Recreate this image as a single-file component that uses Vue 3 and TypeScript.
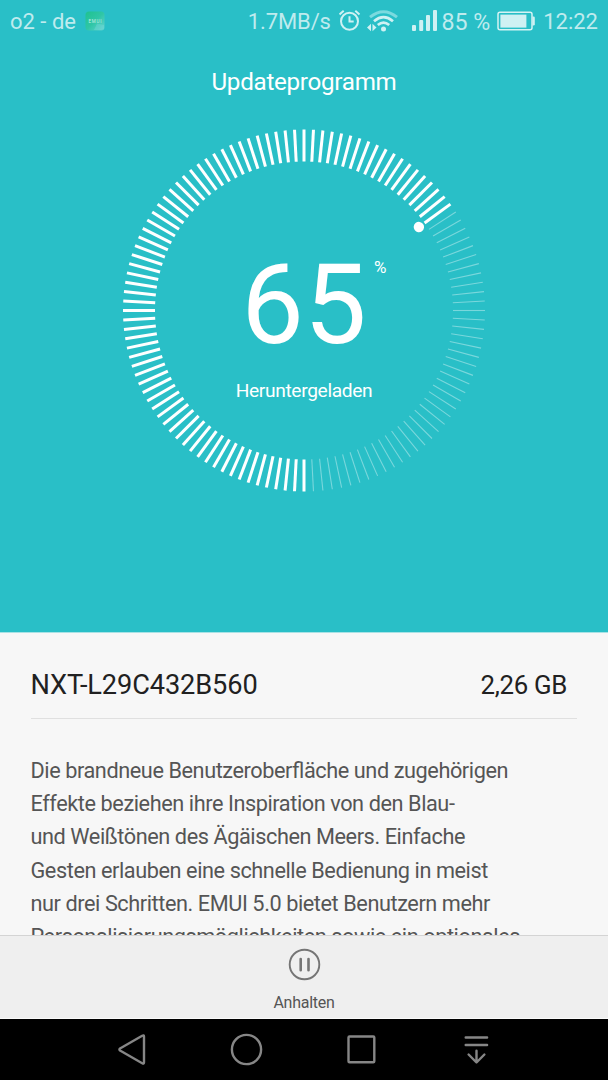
<script setup lang="ts">
interface Tick {
  angle: number
  done: boolean
}

const percent = 65
const tickCount = 120
const reached = Math.round((percent / 100) * tickCount)

const ticks: Tick[] = Array.from({ length: tickCount }, (_, i) => ({
  angle: i * (360 / tickCount),
  done: i <= reached,
}))
const knobAngle = reached * (360 / tickCount)

const lines: string[] = [
  'Die brandneue Benutzeroberfläche und zugehörigen',
  'Effekte beziehen ihre Inspiration von den Blau-',
  'und Weißtönen des Ägäischen Meers. Einfache',
  'Gesten erlauben eine schnelle Bedienung in meist',
  'nur drei Schritten. EMUI 5.0 bietet Benutzern mehr',
  'Personalisierungsmöglichkeiten sowie ein optionales',
]
</script>

<template>
  <div class="screen">
    <section class="hero">
      <header class="status">
        <span class="carrier">o2 - de</span>
        <svg class="emui" width="20" height="20" viewBox="0 0 20 20">
          <defs>
            <linearGradient id="emuiFill" x1="0" y1="0" x2="1" y2="1">
              <stop offset="0" stop-color="#1fc28f" />
              <stop offset="0.5" stop-color="#2fc6a6" />
              <stop offset="1" stop-color="#62d3d2" />
            </linearGradient>
          </defs>
          <rect x="0.5" y="0.5" width="19" height="19" rx="3.5" fill="url(#emuiFill)" />
          <path d="M12 12.5L19 14v3.5L16 19H9z" fill="#7ddbe0" opacity="0.35" />
          <text x="10" y="11.5" text-anchor="middle" textLength="13" class="emui-text">EMUI</text>
        </svg>
        <span class="grow"></span>
        <span class="speed">1.7MB/s</span>
        <svg class="alarm" width="22" height="24" viewBox="0 0 22 24" fill="none" stroke="#cff1f3" stroke-width="2">
          <circle cx="10.5" cy="12.3" r="8.5" />
          <path d="M10.5 7.3v5.2h4.2" />
          <path d="M0.5 5.4L4.7 1.8M20.5 5.4L16.3 1.8" />
        </svg>
        <svg class="wifi" width="32" height="24" viewBox="0 0 32 24" fill="none">
          <path d="M4 8.2Q17.5-2.8 31 8.2" stroke="#7bdadf" stroke-width="3" />
          <path d="M8 12.2Q17.5 4 27 12.2" stroke="#cff1f3" stroke-width="2.7" />
          <path d="M11.8 16Q17.5 11.2 23.2 16" stroke="#cff1f3" stroke-width="2.7" />
          <circle cx="17.5" cy="20" r="2.5" fill="#cff1f3" />
          <path d="M1 18.5L5 14.8v7.4zM10.5 18.5L6.5 14.8v7.4z" fill="#cff1f3" />
        </svg>
        <svg class="signal" width="25" height="22" viewBox="0 0 25 22" fill="#cff1f3">
          <rect x="0" y="15" width="4" height="6" rx="1" />
          <rect x="7.2" y="10" width="4" height="11" rx="1" />
          <rect x="14" y="5" width="4" height="16" rx="1" />
          <rect x="21" y="0" width="4" height="21" rx="1" />
        </svg>
        <span class="charge">85 %</span>
        <svg class="battery" width="38" height="20" viewBox="0 0 38 20">
          <rect x="1" y="1.2" width="34" height="17.6" rx="2" fill="none" stroke="#d5f3f4" stroke-width="1.5" />
          <rect x="3.4" y="3.6" width="26" height="13" fill="#cff1f3" />
          <path d="M35.4 5.4h1q1.4 0 1.4 1.4v6.4q0 1.4-1.4 1.4h-1z" fill="#cff1f3" />
        </svg>
        <span class="clock">12:22</span>
      </header>

      <h1 class="title">Updateprogramm</h1>

      <div class="dial">
        <svg class="ring" width="364" height="365" viewBox="-182 -182.5 364 365">
          <line
            v-for="tick in ticks"
            :key="tick.angle"
            x1="0"
            y1="149"
            x2="0"
            y2="181"
            :class="tick.done ? 'tick-done' : 'tick-open'"
            :transform="`rotate(${tick.angle})`"
          />
          <circle cx="0" cy="142" r="5.2" fill="#fff" :transform="`rotate(${knobAngle})`" />
        </svg>
        <div class="readout">
          <div class="value">{{ percent }}<span class="unit">%</span></div>
          <div class="state">Heruntergeladen</div>
        </div>
      </div>
    </section>

    <main class="details">
      <div class="build">
        <span class="build-name">NXT-L29C432B560</span>
        <span class="build-size">2,26 GB</span>
      </div>
      <p class="notes">
        <span v-for="line in lines" :key="line" class="line">{{ line }}</span>
      </p>
    </main>

    <footer class="action">
      <svg width="34" height="34" viewBox="0 0 34 34" fill="none" stroke="#757575">
        <circle cx="17.5" cy="16.5" r="14.8" stroke-width="1.9" />
        <path d="M13.7 11.1v11.2M21.5 11.1v11.2" stroke-width="2.6" stroke-linecap="round" />
      </svg>
      <span class="action-label">Anhalten</span>
    </footer>

    <nav class="navbar">
      <svg width="608" height="61" viewBox="0 0 608 61" fill="none" stroke="#868686" stroke-width="2.4" stroke-linecap="round" stroke-linejoin="round">
        <path d="M142.2 16.8Q144 15.8 144 17.5V43.5Q144 45.2 142.2 44.2L120 31.5Q118.8 30.5 120 29.5Z" />
        <circle cx="246.5" cy="30.5" r="14.6" />
        <rect x="348.5" y="17.5" width="25.8" height="25.8" rx="1" />
        <path d="M465.7 18.5h21.4M465.7 26h21.4M476.5 31.8v11.5M468.6 35.5l7.9 8 7.9-8" />
      </svg>
    </nav>
  </div>
</template>

<style>
body {
  margin: 0;
}
</style>

<style scoped>
.screen {
  width: 608px;
  height: 1080px;
  display: flex;
  flex-direction: column;
  overflow: hidden;
  background: #f7f7f7;
  font-family: Roboto, "Noto Sans", sans-serif;
}
.hero {
  height: 633px;
  flex: none;
  background: #29bfc7;
  border-bottom: 1px solid #a9e2e5;
  box-sizing: border-box;
  color: #fff;
}
.status {
  height: 42px;
  display: flex;
  align-items: center;
  padding: 0 10px;
  font-size: 22px;
  line-height: 40px;
  color: #bfebee;
  white-space: nowrap;
}
.status span {
  padding-top: 2px;
}
.emui {
  margin-left: 9px;
}
.emui-text {
  font-size: 4.5px;
  fill: #c5efe6;
}
.grow {
  flex: 1;
}
.speed {
  letter-spacing: -0.1px;
}
.alarm {
  margin-left: 8px;
}
.wifi {
  margin-left: 5px;
}
.signal {
  margin-left: 14px;
}
.charge {
  margin-left: 4.5px;
  font-size: 23.2px;
}
.battery {
  margin-left: 7px;
}
.clock {
  margin-left: 8px;
}
.title {
  margin: 24px 0 0;
  font-size: 24.2px;
  letter-spacing: -0.28px;
  font-weight: 400;
  line-height: 32px;
  text-align: center;
}
.dial {
  width: 364px;
  margin: 30px auto 0;
  display: grid;
}
.ring,
.readout {
  grid-area: 1 / 1;
}
.tick-done {
  stroke: #fff;
  stroke-width: 3;
}
.tick-open {
  stroke: #fff;
  stroke-opacity: 0.38;
  stroke-width: 1.1;
}
.readout {
  text-align: center;
  padding-top: 117px;
}
.value {
  position: relative;
  width: 132px;
  margin: 0 auto;
  font-size: 111.5px;
  line-height: 120px;
}
.unit {
  position: absolute;
  left: 136px;
  top: 12px;
  font-size: 17px;
  line-height: 20px;
}
.state {
  margin-top: 14px;
  font-size: 19.2px;
  letter-spacing: -0.35px;
  line-height: 24px;
}
.details {
  flex: 1;
  min-height: 0;
  overflow: hidden;
  padding: 0 31px 0 30.5px;
}
.build {
  height: 85px;
  display: flex;
  justify-content: space-between;
  align-items: baseline;
  padding-right: 10px;
  border-bottom: 1px solid #e0e0e0;
  color: #212121;
  line-height: 104px;
}
.build-name {
  font-size: 27.2px;
  letter-spacing: -0.12px;
}
.build-size {
  font-size: 25.8px;
  letter-spacing: -0.3px;
}
.notes {
  margin: 35px 0 0;
  font-size: 21.7px;
  letter-spacing: -0.42px;
  font-feature-settings: "liga" 1;
  line-height: 33.2px;
  color: #555;
  white-space: nowrap;
}
.line {
  display: block;
}
.action {
  height: 84px;
  flex: none;
  box-sizing: border-box;
  padding-top: 12px;
  border-top: 1px solid #d4d4d4;
  border-bottom: 1px solid #fafafa;
  background: #efefef;
  display: flex;
  flex-direction: column;
  align-items: center;
}
.action-label {
  margin-top: 10px;
  font-size: 16px;
  letter-spacing: -0.25px;
  line-height: 22px;
  color: #555;
}
.navbar {
  height: 61px;
  flex: none;
  background: #000;
}
.navbar svg {
  display: block;
}
</style>
